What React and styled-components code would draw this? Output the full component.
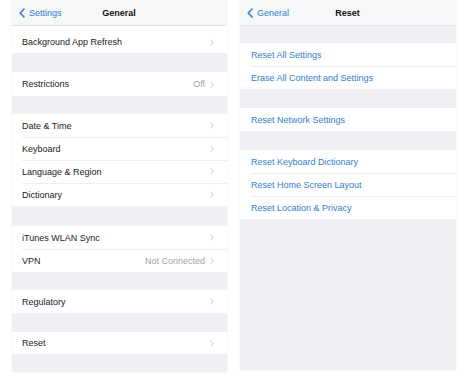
import React from 'react';
import styled, { createGlobalStyle } from 'styled-components';

const GlobalStyle = createGlobalStyle`
  html, body {
    margin: 0;
    padding: 0;
    background: #ffffff;
    font-family: "Liberation Sans", Arial, sans-serif;
  }
`;

const Page = styled.div`
  display: flex;
  align-items: flex-start;
  gap: 13px;
  padding-left: 12px;
  width: 474px;
  height: 380px;
  box-sizing: border-box;
`;

const Panel = styled.div`
  display: flex;
  flex-direction: column;
  width: ${(p) => p.$width}px;
  height: ${(p) => p.$height}px;
  background: #efeff4;
  box-shadow: 0 0 0 1px rgba(0, 0, 0, 0.025);
`;

const NavBar = styled.div`
  display: grid;
  grid-template-columns: 1fr auto 1fr;
  align-items: center;
  height: 26px;
  padding: 1px 8px 0 7px;
  background: #f7f7f8;
  border-bottom: 1px solid #e4e4e8;
  box-sizing: border-box;
`;

const Back = styled.div`
  display: flex;
  align-items: center;
  gap: 4px;
  color: #2f7fd6;
  font-size: 9px;
`;

const Title = styled.div`
  font-size: 9px;
  font-weight: 700;
  color: #111;
`;

const Gap = styled.div`
  height: ${(p) => p.$h}px;
  flex-shrink: 0;
`;

const Group = styled.div`
  background: #ffffff;
`;

const Row = styled.div`
  position: relative;
  display: flex;
  align-items: center;
  height: ${(p) => p.$h || 23}px;
  padding: ${(p) => p.$top || 0}px 13px 0 ${(p) => p.$pad}px;
  box-sizing: border-box;
  font-size: 9px;
  color: ${(p) => (p.$link ? '#3480d4' : '#1a1a1a')};

  & + &::before {
    content: '';
    position: absolute;
    top: 0;
    left: ${(p) => p.$pad}px;
    right: 0;
    height: 1px;
    background: #efeff2;
  }
`;

const Label = styled.span`
  flex: 1;
`;

const Detail = styled.span`
  color: #a3a3a8;
  margin-right: 5px;
`;

const Chevron = () => (
  <svg width="4" height="7" viewBox="0 0 4 7">
    <path d="M0.6 0.6 L3.3 3.5 L0.6 6.4" fill="none" stroke="#c4c4c9" strokeWidth="0.9" />
  </svg>
);

const BackChevron = () => (
  <svg width="6" height="10" viewBox="0 0 6 10">
    <path d="M5 1 L1.2 5 L5 9" fill="none" stroke="#2f7fd6" strokeWidth="1.6" strokeLinecap="round" strokeLinejoin="round" />
  </svg>
);

const generalSections = [
  { gap: 0, rows: [{ label: 'Background App Refresh', h: 27, top: 5 }] },
  { gap: 19, rows: [{ label: 'Restrictions', detail: 'Off', h: 24 }] },
  {
    gap: 18,
    rows: [
      { label: 'Date & Time' },
      { label: 'Keyboard' },
      { label: 'Language & Region' },
      { label: 'Dictionary' },
    ],
  },
  { gap: 20, rows: [{ label: 'iTunes WLAN Sync' }, { label: 'VPN', detail: 'Not Connected' }] },
  { gap: 18, rows: [{ label: 'Regulatory' }] },
  { gap: 19, rows: [{ label: 'Reset', h: 22 }] },
];

const resetSections = [
  { gap: 17, rows: [{ label: 'Reset All Settings' }, { label: 'Erase All Content and Settings' }] },
  { gap: 19, rows: [{ label: 'Reset Network Settings' }] },
  {
    gap: 19,
    rows: [
      { label: 'Reset Keyboard Dictionary' },
      { label: 'Reset Home Screen Layout' },
      { label: 'Reset Location & Privacy' },
    ],
  },
];

const Screen = ({ width, height, back, title, sections, link, pad }) => (
  <Panel $width={width} $height={height}>
    <NavBar>
      <Back>
        <BackChevron />
        {back}
      </Back>
      <Title>{title}</Title>
      <span />
    </NavBar>
    {sections.map((s, i) => (
      <React.Fragment key={i}>
        <Gap $h={s.gap} />
        <Group>
          {s.rows.map((r) => (
            <Row key={r.label} $h={r.h} $top={r.top} $link={link} $pad={pad}>
              <Label>{r.label}</Label>
              {r.detail && <Detail>{r.detail}</Detail>}
              {!link && <Chevron />}
            </Row>
          ))}
        </Group>
      </React.Fragment>
    ))}
  </Panel>
);

const App = () => (
  <>
    <GlobalStyle />
    <Page>
      <Screen width={215} height={372} back="Settings" title="General" sections={generalSections} pad={10} />
      <Screen width={216} height={370} back="General" title="Reset" sections={resetSections} link pad={11} />
    </Page>
  </>
);

export default App;
